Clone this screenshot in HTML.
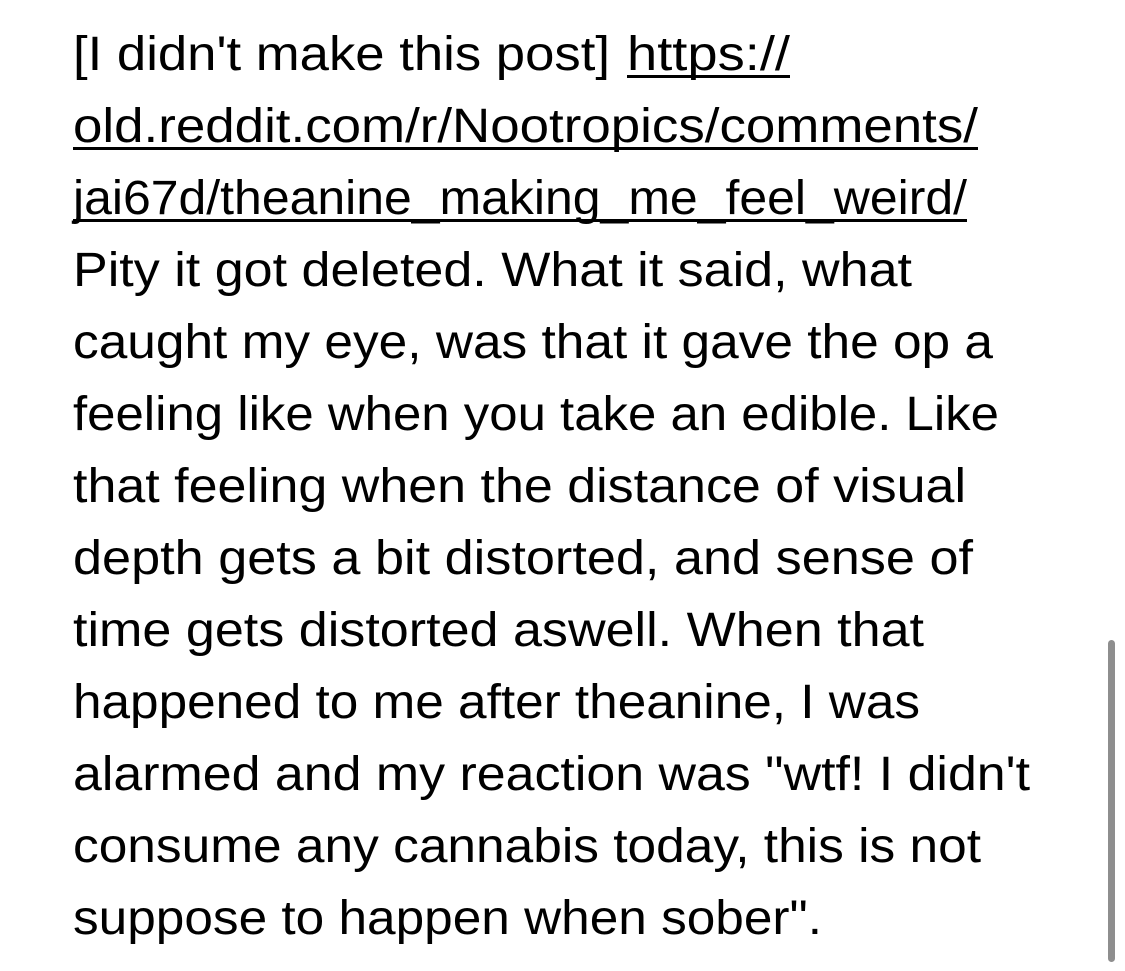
<!DOCTYPE html>
<html><head><meta charset="utf-8"><style>
html,body{margin:0;padding:0;background:#fff;width:1125px;height:971px;overflow:hidden}
svg{display:block}
text{font-family:"Liberation Sans",sans-serif;font-size:48px;fill:#000}
</style></head><body>
<svg width="1125" height="971" viewBox="0 0 1125 971">
<text x="73" y="70" textLength="537" lengthAdjust="spacingAndGlyphs">[I didn't make this post]</text>
<text x="627" y="70" textLength="163" lengthAdjust="spacingAndGlyphs">https://</text>
<rect x="627" y="75" width="163" height="3"/>
<text x="73" y="142" textLength="905" lengthAdjust="spacingAndGlyphs">old.reddit.com/r/Nootropics/comments/</text>
<rect x="73" y="147" width="905" height="3"/>
<text x="73" y="214" textLength="894" lengthAdjust="spacingAndGlyphs">jai67d/theanine_making_me_feel_weird/</text>
<rect x="73" y="219" width="894" height="3"/>
<text x="73" y="286" textLength="839" lengthAdjust="spacingAndGlyphs">Pity it got deleted. What it said, what</text>
<text x="73" y="358" textLength="920" lengthAdjust="spacingAndGlyphs">caught my eye, was that it gave the op a</text>
<text x="73" y="430" textLength="926" lengthAdjust="spacingAndGlyphs">feeling like when you take an edible. Like</text>
<text x="73" y="502" textLength="893" lengthAdjust="spacingAndGlyphs">that feeling when the distance of visual</text>
<text x="73" y="574" textLength="900" lengthAdjust="spacingAndGlyphs">depth gets a bit distorted, and sense of</text>
<text x="73" y="646" textLength="851" lengthAdjust="spacingAndGlyphs">time gets distorted aswell. When that</text>
<text x="73" y="718" textLength="847" lengthAdjust="spacingAndGlyphs">happened to me after theanine, I was</text>
<text x="73" y="790" textLength="957" lengthAdjust="spacingAndGlyphs">alarmed and my reaction was "wtf! I didn't</text>
<text x="73" y="862" textLength="908" lengthAdjust="spacingAndGlyphs">consume any cannabis today, this is not</text>
<text x="73" y="934" textLength="749" lengthAdjust="spacingAndGlyphs">suppose to happen when sober".</text>
<rect x="1108" y="640" width="7" height="322" rx="3.5" fill="#8e8e8e"/>
</svg>
</body></html>
